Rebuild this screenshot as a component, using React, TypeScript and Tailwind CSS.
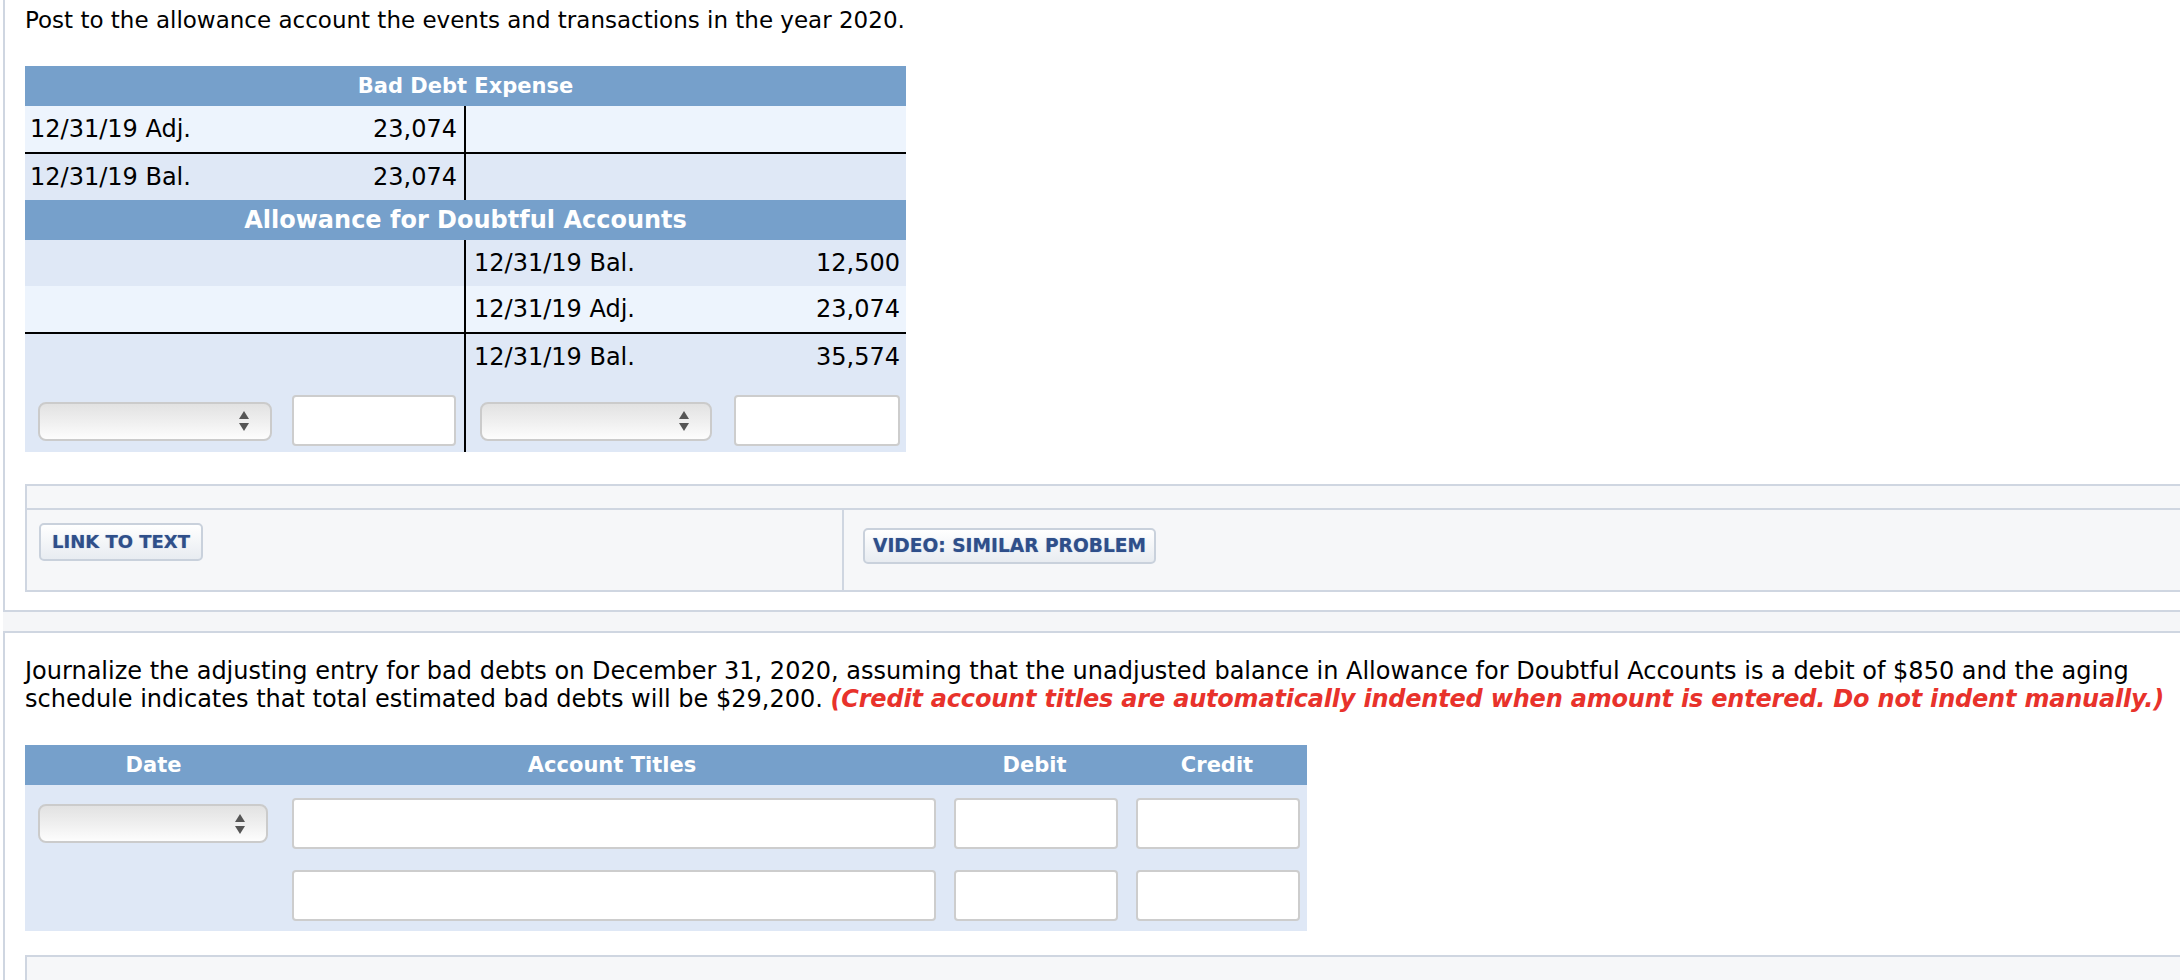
import React from 'react';

// Colours picked from the reference page
const LINE = 'border-[#cfd6e1]';
const ROW_LIGHT = 'bg-[#edf4fd]';
const ROW_DARK = 'bg-[#dfe8f6]';
const HEAD = 'bg-[#76a0cb] font-bold text-white';

const SelectBox: React.FC<{ className?: string }> = ({ className = '' }) => (
  <div
    className={`flex h-[39px] items-center justify-end rounded-[8px] border-2 border-[#cbcbcb] bg-gradient-to-b from-[#e2e2e2] via-[#efefef] to-[#fdfdfd] pr-[20px] ${className}`}
  >
    <svg width="12" height="22" viewBox="0 0 12 22" aria-hidden>
      <path d="M6 1 L11 9 L1 9 Z" fill="#555" />
      <path d="M1 13 L11 13 L6 21 Z" fill="#555" />
    </svg>
  </div>
);

const TextBox: React.FC<{ className?: string }> = ({ className = '' }) => (
  <input
    type="text"
    className={`h-[51px] rounded-[4px] border-2 border-[#cdcdcd] bg-white px-2 outline-none ${className}`}
  />
);

interface TRowProps {
  left?: [string, string];
  right?: [string, string];
  tone: string;
  rule?: boolean;
}

// Une ligne de compte en T : libellé + montant de chaque côté, trait vertical au milieu.
const TRow: React.FC<TRowProps> = ({ left, right, tone, rule }) => (
  <div
    className={`grid ${rule ? 'h-[48px] border-b-2 border-black' : 'h-[46px]'} grid-cols-[257px_184px_257px_183px] text-[24px] ${tone}`}
  >
    <span className="flex items-center pl-[5px]">{left?.[0]}</span>
    <span className="flex items-center justify-end border-r-2 border-black pr-[7px]">{left?.[1]}</span>
    <span className="flex items-center pl-[8px]">{right?.[0]}</span>
    <span className="flex items-center justify-end pr-[6px]">{right?.[1]}</span>
  </div>
);

const TAccounts: React.FC = () => (
  <div className="w-[881px]">
    <div className={`flex h-[40px] items-center justify-center text-[21px] ${HEAD}`}>Bad Debt Expense</div>
    <TRow left={['12/31/19 Adj.', '23,074']} tone={ROW_LIGHT} rule />
    <TRow left={['12/31/19 Bal.', '23,074']} tone={ROW_DARK} />
    <div className={`flex h-[40px] items-center justify-center text-[24px] ${HEAD}`}>Allowance for Doubtful Accounts</div>
    <TRow right={['12/31/19 Bal.', '12,500']} tone={ROW_DARK} />
    <TRow right={['12/31/19 Adj.', '23,074']} tone={ROW_LIGHT} rule />
    <TRow right={['12/31/19 Bal.', '35,574']} tone={ROW_DARK} />
    <div className={`grid h-[72px] grid-cols-[257px_184px_257px_183px] ${ROW_DARK}`}>
      <div className="flex items-center pl-[13px] pr-[10px] pt-[10px]">
        <SelectBox className="w-full" />
      </div>
      <div className="flex items-center border-r-2 border-black pl-[10px] pr-[8px] pt-[8px]">
        <TextBox className="w-full" />
      </div>
      <div className="flex items-center pl-[14px] pr-[11px] pt-[10px]">
        <SelectBox className="w-full" />
      </div>
      <div className="flex items-center pl-[11px] pr-[6px] pt-[8px]">
        <TextBox className="w-full" />
      </div>
    </div>
  </div>
);

const ResourceButton: React.FC<{ label: string; className?: string }> = ({ label, className = '' }) => (
  <button
    className={`rounded-[5px] border-2 border-[#c9d1dc] bg-gradient-to-b from-white to-[#e8ecf1] font-bold text-[#2f4f8a] [text-shadow:0_0_1px_#8aa0c8] ${className}`}
  >
    {label}
  </button>
);

const Resources: React.FC = () => (
  <div className={`border-2 border-r-0 ${LINE} bg-[#f6f7f9]`}>
    <div className={`h-[24px] border-b-2 ${LINE}`} />
    <div className="flex h-[80px]">
      <div className={`w-[817px] border-r-2 ${LINE} pl-[12px] pt-[13px]`}>
        <ResourceButton label="LINK TO TEXT" className="h-[38px] w-[164px] text-[18px]" />
      </div>
      <div className="pl-[19px] pt-[18px]">
        <ResourceButton label="VIDEO: SIMILAR PROBLEM" className="h-[36px] w-[293px] text-[18.6px]" />
      </div>
    </div>
  </div>
);

const JOURNAL_COLS = 'grid-cols-[257px_660px_185px_180px]';

const Journal: React.FC = () => (
  <div className="w-[1282px]">
    <div className={`grid h-[40px] ${JOURNAL_COLS} items-center text-center text-[21px] ${HEAD}`}>
      <span>Date</span>
      <span>Account Titles</span>
      <span>Debit</span>
      <span>Credit</span>
    </div>
    <div className={`flex flex-col gap-[21px] pb-[10px] pt-[13px] ${ROW_DARK}`}>
      {[0, 1].map(i => (
        <div key={i} className={`grid ${JOURNAL_COLS} items-center`}>
          <div className="pl-[13px] pr-[14px]">{i === 0 && <SelectBox className="h-[37px] w-full" />}</div>
          <div className="pl-[10px] pr-[6px]">
            <TextBox className="w-full" />
          </div>
          <div className="pl-[12px] pr-[9px]">
            <TextBox className="w-full" />
          </div>
          <div className="pl-[9px] pr-[7px]">
            <TextBox className="w-full" />
          </div>
        </div>
      ))}
    </div>
  </div>
);

export default function App() {
  return (
    <div className="min-h-screen overflow-hidden bg-white font-['DejaVu_Sans',Verdana,sans-serif] leading-[26px] text-black">
      <section className={`ml-[3px] border-b-2 border-l-2 ${LINE} pb-[18px] pl-[20px] pt-[6px]`}>
        <p className="text-[23px] leading-[28px]">Post to the allowance account the events and transactions in the year 2020.</p>
        <div className="mt-[32px]">
          <TAccounts />
        </div>
        <div className="mt-[32px]">
          <Resources />
        </div>
      </section>

      <div className="ml-[3px] h-[19px] bg-[#f5f6f8]" />

      <section className={`ml-[3px] border-l-2 border-t-2 ${LINE} pl-[20px] pt-[24px]`}>
        <p className="whitespace-nowrap text-[24px] leading-[28px]">
          Journalize the adjusting entry for bad debts on December 31, 2020, assuming that the unadjusted balance in
          Allowance for Doubtful Accounts is a debit of $850 and the aging
          <br />
          schedule indicates that total estimated bad debts will be $29,200.{' '}
          <span className="font-bold italic tracking-[-0.2px] text-[#e8322b]">
            (Credit account titles are automatically indented when amount is entered. Do not indent manually.)
          </span>
        </p>
        <div className="mt-[32px]">
          <Journal />
        </div>
        <div className={`mt-[24px] h-[40px] border-l-2 border-t-2 ${LINE} bg-[#f6f7f9]`} />
      </section>
    </div>
  );
}
